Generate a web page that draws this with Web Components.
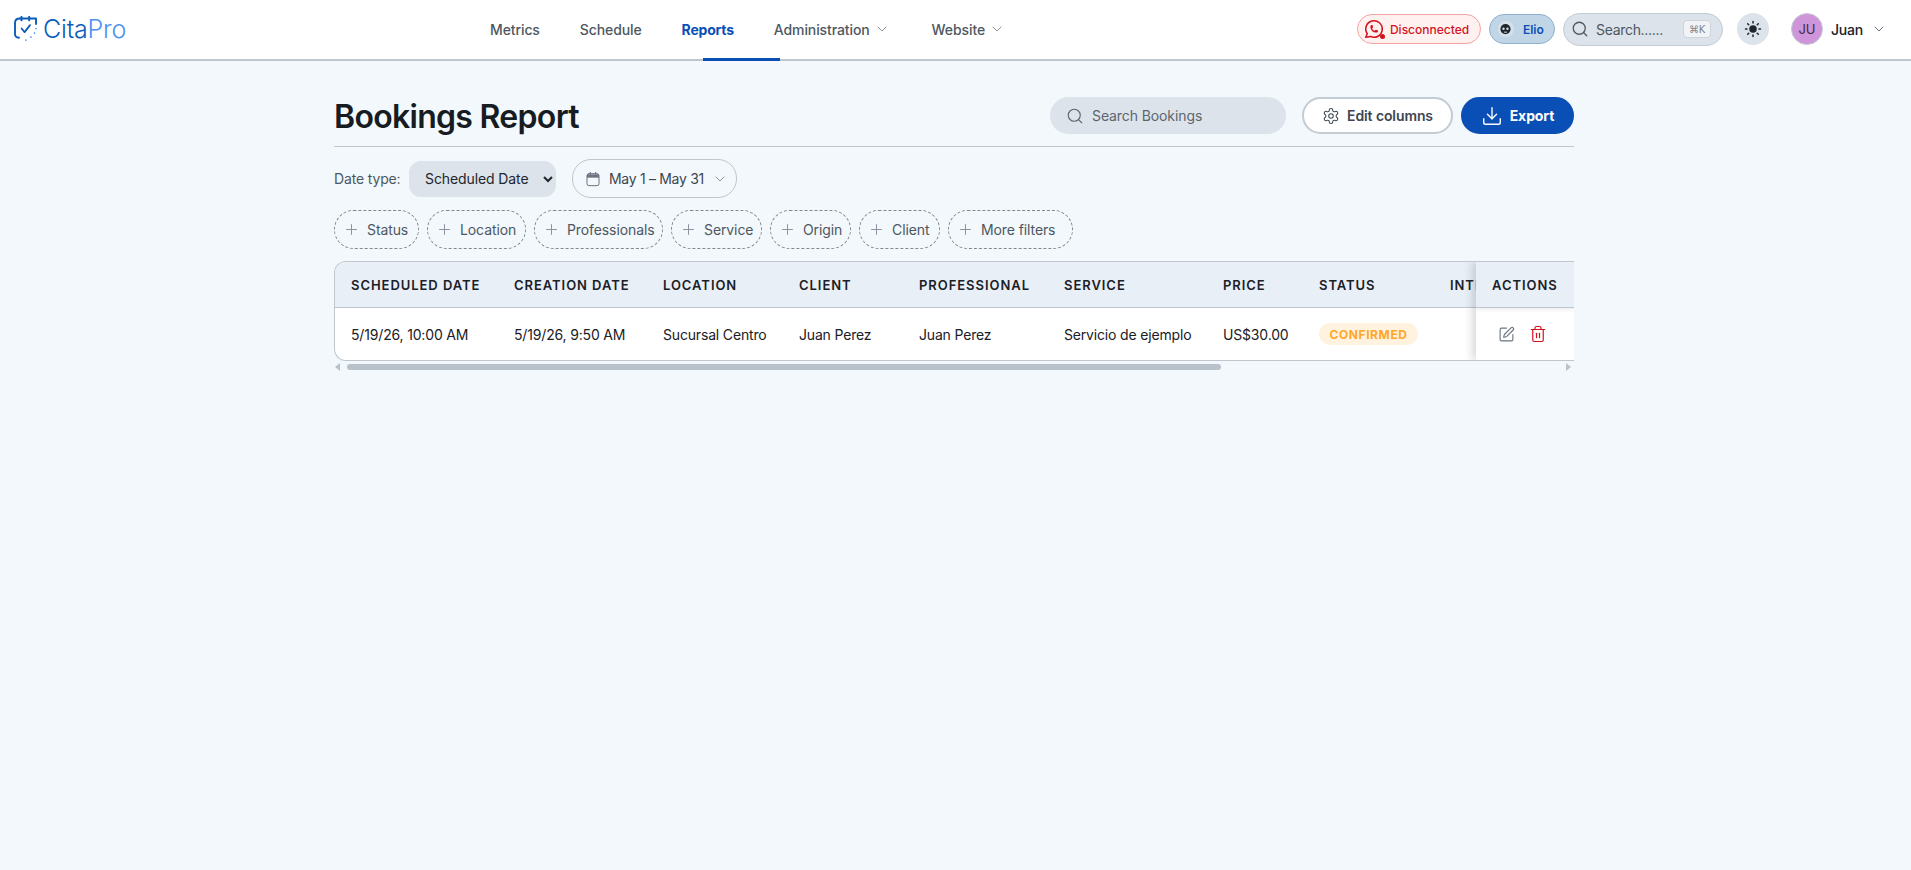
<!DOCTYPE html>
<html lang="en">
<head>
<meta charset="utf-8">
<title>Bookings Report</title>
<style>
  html, body { margin: 0; height: 100%; }
  body {
    background: #f3f8fc;
    color: #1a2026;
    font-family: Inter, "Noto Sans", "Liberation Sans", sans-serif;
    font-size: 14px;
  }
</style>
</head>
<body>
<app-navbar></app-navbar>
<report-page></report-page>

<script>
const svg = (size, body, extra = '') =>
  `<svg width="${size}" height="${size}" viewBox="0 0 24 24" fill="none" stroke="currentColor" stroke-width="2" stroke-linecap="round" stroke-linejoin="round" ${extra}>${body}</svg>`;

const ICONS = {
  search: '<circle cx="11" cy="11" r="8"/><path d="m21 21-4.3-4.3"/>',
  chevron: '<path d="m6 9 6 6 6-6"/>',
  plus: '<path d="M5 12h14"/><path d="M12 5v14"/>',
  calendar: '<rect x="3" y="4" width="18" height="18" rx="3"/><path d="M3 5h18v5H3z" fill="currentColor" stroke="none"/><path d="M8 2v3"/><path d="M16 2v3"/>',
  gear: '<path d="M12.22 2h-.44a2 2 0 0 0-2 2v.18a2 2 0 0 1-1 1.73l-.43.25a2 2 0 0 1-2 0l-.15-.08a2 2 0 0 0-2.73.73l-.22.38a2 2 0 0 0 .73 2.73l.15.1a2 2 0 0 1 1 1.72v.51a2 2 0 0 1-1 1.74l-.15.09a2 2 0 0 0-.73 2.73l.22.38a2 2 0 0 0 2.73.73l.15-.08a2 2 0 0 1 2 0l.43.25a2 2 0 0 1 1 1.73V20a2 2 0 0 0 2 2h.44a2 2 0 0 0 2-2v-.18a2 2 0 0 1 1-1.73l.43-.25a2 2 0 0 1 2 0l.15.08a2 2 0 0 0 2.73-.73l.22-.39a2 2 0 0 0-.73-2.73l-.15-.08a2 2 0 0 1-1-1.74v-.5a2 2 0 0 1 1-1.74l.15-.09a2 2 0 0 0 .73-2.73l-.22-.38a2 2 0 0 0-2.73-.73l-.15.08a2 2 0 0 1-2 0l-.43-.25a2 2 0 0 1-1-1.73V4a2 2 0 0 0-2-2z"/><circle cx="12" cy="12" r="3"/>',
  download: '<path d="M21 15v4a2 2 0 0 1-2 2H5a2 2 0 0 1-2-2v-4"/><path d="m7 10 5 5 5-5"/><path d="M12 15V3"/>',
  edit: '<path d="M12 3H5a2 2 0 0 0-2 2v14a2 2 0 0 0 2 2h14a2 2 0 0 0 2-2v-7"/><path d="M18.375 2.625a1 1 0 0 1 3 3l-9.013 9.014a2 2 0 0 1-.853.505l-2.873.84a.5.5 0 0 1-.62-.62l.84-2.873a2 2 0 0 1 .506-.852z"/>',
  trash: '<path d="M3 6h18"/><path d="M19 6v14c0 1-1 2-2 2H7c-1 0-2-1-2-2V6"/><path d="M8 6V4c0-1 1-2 2-2h4c1 0 2 1 2 2v2"/><path d="M10 11v6"/><path d="M14 11v6"/>',
  whatsapp: '<path d="M3 21l1.65-3.8a9 9 0 1 1 3.4 2.9l-5.05.9"/><path d="M9 10a.5.5 0 0 0 1 0V9a.5.5 0 0 0-1 0v1a5 5 0 0 0 5 5h1a.5.5 0 0 0 0-1h-1a.5.5 0 0 0 0 1"/>',
  sun: '<circle cx="12" cy="12" r="5" fill="currentColor" stroke="none"/><path d="M12 2v2"/><path d="M12 20v2"/><path d="m4.93 4.93 1.41 1.41"/><path d="m17.66 17.66 1.41 1.41"/><path d="M2 12h2"/><path d="M20 12h2"/><path d="m6.34 17.66-1.41 1.41"/><path d="m19.07 4.93-1.41 1.41"/>'
};

class CitaLogo extends HTMLElement {
  connectedCallback() {
    this.attachShadow({ mode: 'open' });
    this.shadowRoot.innerHTML = `
      <style>
        :host { display: flex; align-items: center; gap: 6px; }
        .word { font-size: 25px; font-weight: 300; letter-spacing: -.2px; color: #0c5db8; line-height: 1; }
        .word span { color: #4a91f2; }
      </style>
      <svg width="23" height="26" viewBox="0 0 23 26" fill="none" stroke="#0c5db8" stroke-width="1.9" stroke-linecap="round" stroke-linejoin="round">
        <path d="M6 2.5C2.5 2.5 1 4.5 1 7v11c0 2 1 3.5 4 3.7"/>
        <path d="M6 2.5h16V8"/>
        <path d="M7.5 .8v3.6M15.2 .8v3.6"/>
        <path d="M7.6 12.5l3 3.6 5.4-7" stroke-width="1.8"/>
        <g stroke="#4a91f2" stroke-width="1.7">
          <path d="M22 12.5v.1M20.5 17v.1M17 21v.1M12 24v.1"/>
        </g>
      </svg>
      <div class="word">Cita<span>Pro</span></div>`;
  }
}
customElements.define('cita-logo', CitaLogo);

class NavLink extends HTMLElement {
  connectedCallback() {
    this.attachShadow({ mode: 'open' });
    const menu = this.hasAttribute('menu');
    this.shadowRoot.innerHTML = `
      <style>
        :host { display: flex; align-items: center; gap: 4px; font-size: 14px; font-weight: 500; letter-spacing: -.1px; color: #4d5761; white-space: nowrap; }
        :host([active]) { color: #0a4fb5; font-weight: 700; letter-spacing: -.2px; }
        svg { color: #8b949e; }
      </style>
      <slot></slot>${menu ? svg(16, ICONS.chevron, 'style="stroke-width:1.5"') : ''}`;
  }
}
customElements.define('nav-link', NavLink);

class StatusPill extends HTMLElement {
  connectedCallback() {
    this.attachShadow({ mode: 'open' });
    this.shadowRoot.innerHTML = `
      <style>
        :host {
          display: flex; align-items: center; box-sizing: border-box; height: 30px;
          border-radius: 15px; border: 1px solid var(--line); background: var(--fill);
          color: var(--ink); font-size: 12px; font-weight: 500; white-space: nowrap;
        }
      </style>
      <slot name="icon"></slot><slot></slot>`;
  }
}
customElements.define('status-pill', StatusPill);

class NavSearch extends HTMLElement {
  connectedCallback() {
    this.attachShadow({ mode: 'open' });
    this.shadowRoot.innerHTML = `
      <style>
        :host {
          display: flex; align-items: center; box-sizing: border-box; width: 160px; height: 33px;
          padding: 0 11px 0 7px; border-radius: 17px; background: #dce3ea; border: 1px solid #c3cbd3;
          color: #4d5761; font-size: 14px; letter-spacing: -.3px;
        }
        svg { color: #4d5761; flex: none; }
        .label { margin-left: 7px; flex: 1; }
        kbd {
          box-sizing: border-box; width: 28px; height: 18px; display: grid; place-items: center;
          font: 10px "DejaVu Sans", sans-serif; color: #7c858e; background: #f1f4f7;
          border: 1px solid #ccd3da; border-radius: 4px;
        }
      </style>
      ${svg(18, ICONS.search, 'style="stroke-width:1.7"')}<span class="label">Search......</span><kbd>⌘K</kbd>`;
  }
}
customElements.define('nav-search', NavSearch);

class UserMenu extends HTMLElement {
  connectedCallback() {
    this.attachShadow({ mode: 'open' });
    this.shadowRoot.innerHTML = `
      <style>
        :host { display: flex; align-items: center; font-size: 14px; font-weight: 500; letter-spacing: -.2px; color: #1a2026; }
        .avatar {
          box-sizing: border-box; width: 32px; height: 32px; border-radius: 50%;
          background: #cf95da; border: 1px solid #c4ccd4; color: #3a2a42;
          display: grid; place-items: center; font-size: 13px; font-weight: 400;
        }
        .name { margin: 0 8px; }
        svg { color: #6b7480; }
      </style>
      <div class="avatar">JU</div><span class="name">Juan</span>${svg(16, ICONS.chevron, 'style="stroke-width:1.5"')}`;
  }
}
customElements.define('user-menu', UserMenu);

class AppNavbar extends HTMLElement {
  connectedCallback() {
    this.attachShadow({ mode: 'open' });
    this.shadowRoot.innerHTML = `
      <style>
        :host {
          display: flex; align-items: center; position: relative; box-sizing: border-box; height: 61px;
          padding: 0 24px 1px 14px; background: #fff; border-bottom: 2px solid #bfc6cd;
        }
        cita-logo { width: 476px; flex: none; }
        nav { display: flex; align-items: center; gap: 40px; }
        nav-link.admin { margin-right: 2px; }
        .underline { position: absolute; left: 703px; width: 77px; bottom: -2px; height: 3px; background: #0a4fb5; }
        .right { margin-left: auto; display: flex; align-items: center; }
        .wa { color: #d3121d; display: block; margin: 0 5px 0 5px; position: relative; }
        .wa i { position: absolute; right: 0; bottom: 1px; width: 5px; height: 5px; background: #d3121d; border-radius: 50%; }
        .wa svg { display: block; }
        .face {
          width: 16px; height: 16px; border-radius: 50%; background: #d5e1ea; margin: 0 9px 0 8px;
          display: grid; place-items: center;
        }
        .sun { width: 32px; height: 32px; border-radius: 50%; background: #dce3ea; color: #1f262d; display: grid; place-items: center; margin: 0 22px 0 14px; }
        .disc { --line: #f4a3a3; --fill: #fff1f0; --ink: #d3121d; width: 124px; margin-right: 8px; }
        .elio { --line: #8fb0cf; --fill: #c0d6e6; --ink: #0a4fb5; width: 66px; margin-right: 8px; font-weight: 600; }
      </style>
      <cita-logo></cita-logo>
      <nav>
        <nav-link>Metrics</nav-link>
        <nav-link>Schedule</nav-link>
        <nav-link active>Reports</nav-link>
        <nav-link class="admin" menu>Administration</nav-link>
        <nav-link menu>Website</nav-link>
      </nav>
      <div class="underline"></div>
      <div class="right">
        <status-pill class="disc">
          <span class="wa" slot="icon">${svg(22, ICONS.whatsapp, 'style="stroke-width:1.7"')}<i></i></span>
          Disconnected
        </status-pill>
        <status-pill class="elio">
          <span class="face" slot="icon">
            <svg width="11" height="11" viewBox="0 0 14 14"><circle cx="7" cy="6.5" r="6.5" fill="#1f262d"/><circle cx="4.5" cy="6" r="1.5" fill="#d5e1ea"/><circle cx="9.5" cy="6" r="1.5" fill="#d5e1ea"/><path d="M5 10.4h4" stroke="#d5e1ea" stroke-width="1.2"/></svg>
          </span>
          Elio
        </status-pill>
        <nav-search></nav-search>
        <div class="sun">${svg(18, ICONS.sun)}</div>
        <user-menu></user-menu>
      </div>`;
  }
}
customElements.define('app-navbar', AppNavbar);

class ActionButton extends HTMLElement {
  connectedCallback() {
    this.attachShadow({ mode: 'open' });
    this.shadowRoot.innerHTML = `
      <style>
        :host {
          display: flex; align-items: center; justify-content: center; gap: 7px; box-sizing: border-box;
          height: 37px; border-radius: 19px; font-size: 14px; font-weight: 600; letter-spacing: -.1px; white-space: nowrap;
          background: #fff; color: #3d4650; border: 2px solid #c3cbd3;
        }
        :host([primary]) { background: #0a4fb5; color: #fff; border-color: #0a4fb5; font-weight: 700; }
      </style>
      <slot name="icon"></slot><slot></slot>`;
  }
}
customElements.define('action-button', ActionButton);

class FilterChip extends HTMLElement {
  connectedCallback() {
    this.attachShadow({ mode: 'open' });
    this.shadowRoot.innerHTML = `
      <style>
        :host {
          display: flex; align-items: center; gap: 7px; box-sizing: border-box; height: 39px; padding-left: 8px;
          border: 1px dashed #80888f; border-radius: 19.5px; color: #4d5761; font-size: 14px; font-weight: 400; letter-spacing: -.1px; white-space: nowrap;
        }
        svg { color: #8b949e; flex: none; }
      </style>
      ${svg(17, ICONS.plus, 'style="stroke-width:1.4"')}<slot></slot>`;
  }
}
customElements.define('filter-chip', FilterChip);

class ReportHeader extends HTMLElement {
  connectedCallback() {
    this.attachShadow({ mode: 'open' });
    this.shadowRoot.innerHTML = `
      <style>
        :host {
          display: flex; align-items: flex-start; box-sizing: border-box; height: 50px; border-bottom: 1px solid #bfc6cd;
        }
        h1 { margin: 0; flex: 1; font-size: 32px; line-height: 39px; font-weight: 600; letter-spacing: -.7px; color: #161c22; }
        .search {
          box-sizing: border-box; width: 236px; height: 37px; padding: 0 16px; border-radius: 19px; background: #dce3ea;
          display: flex; align-items: center; gap: 8px; color: #5d6670; font-size: 14px; letter-spacing: -.1px;
        }
        .search svg { flex: none; }
        action-button.edit { width: 151px; margin: 0 8px 0 16px; }
        action-button.export { width: 113px; }
        svg[slot="icon"] { flex: none; }
      </style>
      <h1><slot></slot></h1>
      <div class="search">${svg(18, ICONS.search, 'style="stroke-width:1.5"')}Search Bookings</div>
      <action-button class="edit">${svg(18, ICONS.gear, 'slot="icon" style="stroke-width:1.4"')}Edit columns</action-button>
      <action-button class="export" primary>${svg(22, ICONS.download, 'slot="icon" style="stroke-width:1.5"')}Export</action-button>`;
  }
}
customElements.define('report-header', ReportHeader);

class DateFilters extends HTMLElement {
  connectedCallback() {
    this.attachShadow({ mode: 'open' });
    this.shadowRoot.innerHTML = `
      <style>
        :host { display: flex; align-items: center; height: 39px; color: #4d5761; font-size: 14px; }
        label { width: 75px; letter-spacing: -.15px; white-space: nowrap; }
        select {
          width: 147px; height: 36px; border: 0; border-radius: 12px; background: #dce3ea; padding: 0 6px 0 12px;
          font: 400 14px Inter, "Noto Sans", sans-serif; letter-spacing: -.1px; color: #1f262d; outline: 0;
        }
        .range {
          box-sizing: border-box; width: 165px; height: 39px; margin-left: 16px; display: flex; align-items: center;
          gap: 8px; padding: 0 12px; border: 1px solid #bfc6cd; border-radius: 19px; color: #3d4650; letter-spacing: -.3px; white-space: nowrap;
        }
        .range span { display: flex; }
        .cal { color: #6b7480; }
        .chev { color: #8b949e; margin-left: auto; }
      </style>
      <label>Date type:</label>
      <select><option>Scheduled Date</option></select>
      <div class="range"><span class="cal">${svg(16, ICONS.calendar, 'style="stroke-width:1.5"')}</span>May 1 – May 31<span class="chev">${svg(16, ICONS.chevron, 'style="stroke-width:1.5"')}</span></div>`;
  }
}
customElements.define('date-filters', DateFilters);

class BookingsTable extends HTMLElement {
  connectedCallback() {
    this.attachShadow({ mode: 'open' });
    const heads = ['Scheduled Date', 'Creation Date', 'Location', 'Client', 'Professional', 'Service', 'Price', 'Status', 'Integration'];
    const cells = ['5/19/26, 10:00 AM', '5/19/26, 9:50 AM', 'Sucursal Centro', 'Juan Perez', 'Juan Perez', 'Servicio de ejemplo', 'US$30.00'];
    this.shadowRoot.innerHTML = `
      <style>
        :host { display: block; }
        .frame {
          display: flex; box-sizing: border-box; height: 100px; overflow: hidden;
          border: 1px solid #bfc6cd; border-right: 0; border-radius: 12px 0 0 12px; background: #fff;
        }
        .scroller { flex: 1; min-width: 0; overflow: hidden; }
        .grid {
          display: grid; width: max-content;
          grid-template-columns: 163px 149px 136px 120px 145px 159px 96px 131px 140px;
          grid-template-rows: 46px 52px;
        }
        .th, .td { box-sizing: border-box; padding-left: 16px; display: flex; align-items: center; white-space: nowrap; }
        .th {
          background: #e9eff6; border-bottom: 1px solid #bfc6cd; font-size: 13px; font-weight: 600;
          letter-spacing: .95px; text-transform: uppercase; color: #1a2026;
        }
        .td { font-size: 14px; letter-spacing: -.17px; color: #1a2026; }
        .badge {
          height: 22px; width: 99px; border-radius: 11px; background: #fff3e0; color: #ffa726;
          display: flex; align-items: center; justify-content: center; font-size: 12px; font-weight: 700; letter-spacing: .6px;
        }
        .actions { width: 98px; flex: none; position: relative; box-shadow: -4px 0 8px rgba(40, 50, 60, .18); z-index: 1; }
        .actions .th { height: 46px; }
        .actions .td { height: 52px; gap: 14px; padding-left: 22px; background: #fff; box-shadow: inset 0 5px 5px -4px rgba(40, 50, 60, .1); }
        .edit { color: #6b7480; }
        .trash { color: #d3121d; }
        .actions svg { display: block; }
        .bar { display: flex; align-items: center; height: 8px; margin-top: 2px; }
        .arrow { width: 0; height: 0; border: 4px solid transparent; }
        .arrow.l { border-right: 5px solid #b9c2cb; border-left: 0; margin-left: 1px; }
        .arrow.r { border-left: 5px solid #b9c2cb; border-right: 0; margin-right: 3px; }
        .track { flex: 1; margin: 0 7px; }
        .thumb { width: 72.1%; height: 6px; border-radius: 3px; background: #b9c2cb; }
      </style>
      <div class="frame">
        <div class="scroller">
          <div class="grid">
            ${heads.map(h => `<div class="th">${h}</div>`).join('')}
            ${cells.map(c => `<div class="td">${c}</div>`).join('')}
            <div class="td"><span class="badge">CONFIRMED</span></div>
            <div class="td"></div>
          </div>
        </div>
        <div class="actions">
          <div class="th">Actions</div>
          <div class="td"><span class="edit">${svg(17, ICONS.edit, 'style="stroke-width:1.6"')}</span><span class="trash">${svg(18, ICONS.trash, 'style="stroke-width:1.6"')}</span></div>
        </div>
      </div>
      <div class="bar"><span class="arrow l"></span><div class="track"><div class="thumb"></div></div><span class="arrow r"></span></div>`;
  }
}
customElements.define('bookings-table', BookingsTable);

class ReportPage extends HTMLElement {
  connectedCallback() {
    this.attachShadow({ mode: 'open' });
    this.shadowRoot.innerHTML = `
      <style>
        :host { display: block; box-sizing: border-box; width: 1243px; margin: 0 auto; padding: 36px 3px 0 0; }
        date-filters { margin-top: 12px; }
        .chips { display: flex; gap: 8px; margin-top: 12px; }
        bookings-table { margin-top: 12px; }
      </style>
      <report-header>Bookings Report</report-header>
      <date-filters></date-filters>
      <div class="chips">
        <filter-chip style="width:85px">Status</filter-chip>
        <filter-chip style="width:99px">Location</filter-chip>
        <filter-chip style="width:129px">Professionals</filter-chip>
        <filter-chip style="width:91px">Service</filter-chip>
        <filter-chip style="width:81px">Origin</filter-chip>
        <filter-chip style="width:81px">Client</filter-chip>
        <filter-chip style="width:125px">More filters</filter-chip>
      </div>
      <bookings-table></bookings-table>`;
  }
}
customElements.define('report-page', ReportPage);
</script>
</body>
</html>
